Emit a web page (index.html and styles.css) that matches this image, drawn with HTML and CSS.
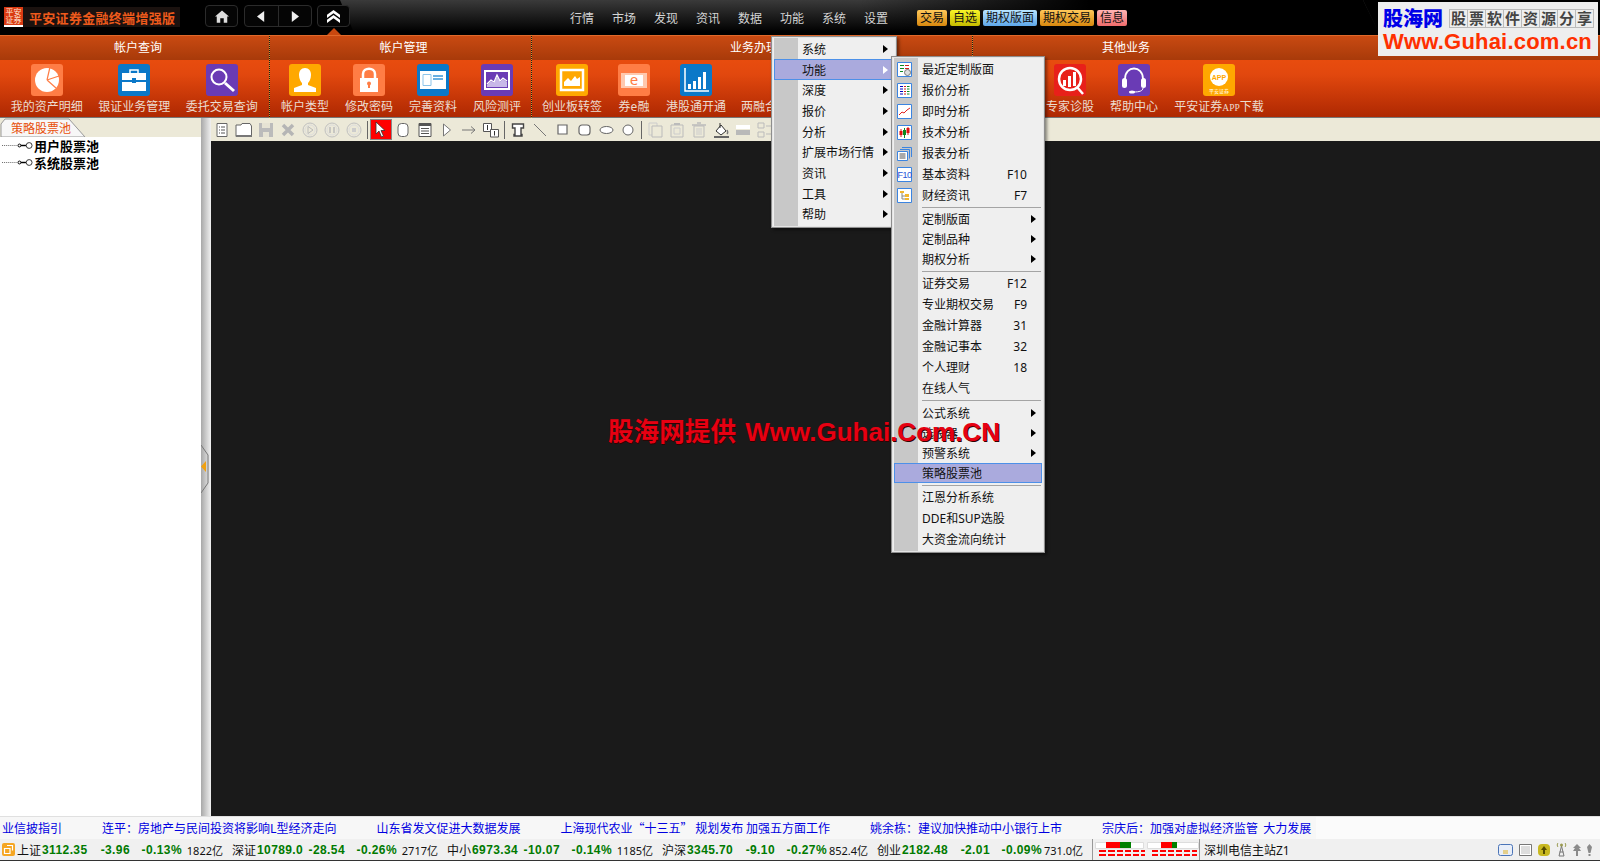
FILE: index.html
```html
<!DOCTYPE html>
<html lang="zh-CN">

<head>
    <meta charset="UTF-8">
    <title>平安证券金融终端增强版</title>
    <link rel="stylesheet" href="styles.css">
</head>

<body>
    <div class="topbar">
        <div class="brand">
            <div class="logo-box">
                <div class="logo">平安<br>证券</div>
                <div class="brand-name">平安证券金融终端增强版</div>
            </div>
            <div class="tbtn home-btn">
                <svg width="14" height="13" viewBox="0 0 16 14"><path d="M8 0 16 7H14V14H10V9H6V14H2V7H0Z" fill="#ddd"/></svg>
            </div>
            <div class="tbtn nav-btn">
                <span><svg width="8" height="13" viewBox="0 0 10 14"><path d="M9 0V14L0 7Z" fill="#eee"/></svg></span>
                <span class="nav-next"><svg width="8" height="13" viewBox="0 0 10 14"><path d="M1 0V14L10 7Z" fill="#eee"/></svg></span>
            </div>
            <div class="tbtn up-btn">
                <svg width="15" height="13" viewBox="0 0 16 14"><path d="M8 0 15 5V8.500L8 3.500 1 8.500V5ZM8 5.500 15 10.500V14L8 9 1 14V10.500Z" fill="#fff"/></svg>
            </div>
        </div>
        <div class="nav-panel">
            <div class="nav">
                <span>行情</span><span>市场</span><span>发现</span><span>资讯</span><span>数据</span><span>功能</span><span>系统</span><span>设置</span>
            </div>
            <div class="tags">
                <span class="tag tag-orange">交易</span>
                <span class="tag tag-yellow">自选</span>
                <span class="tag tag-blue">期权版面</span>
                <span class="tag tag-orange">期权交易</span>
                <span class="tag tag-pink">信息</span>
            </div>
        </div>
    </div>

    <div class="ribbon">
        <div class="group group-1">
            <div class="group-title">帐户查询</div>
            <div class="group-items">
                <div class="item w-87">
                    <span class="icon bg-peach"><svg width="32" height="32" viewBox="0 0 32 32"><circle cx="16" cy="16" r="12" fill="#fff"/><path d="M16 16 19 3M16 16 28 12M16 16 25 24" stroke="#ff7d45" stroke-width="1.2" fill="none"/></svg></span>
                    <span class="label">我的资产明细</span>
                </div>
                <div class="item w-87">
                    <span class="icon bg-blue"><svg width="32" height="32" viewBox="0 0 32 32"><path d="M12 9V6H20V9" stroke="#fff" stroke-width="1.5" fill="none"/><path d="M4 9H28V16H18V14H14V16H4ZM4 18H14V19H18V18H28V27H4Z" fill="#fff"/></svg></span>
                    <span class="label">银证业务管理</span>
                </div>
                <div class="item w-87">
                    <span class="icon bg-purple"><svg width="32" height="32" viewBox="0 0 32 32"><circle cx="13" cy="13" r="7.5" stroke="#fff" stroke-width="2" fill="none"/><path d="M19 19 28 27" stroke="#fff" stroke-width="3"/></svg></span>
                    <span class="label">委托交易查询</span>
                </div>
            </div>
        </div>
        <div class="group group-2">
            <div class="group-title">帐户管理</div>
            <div class="group-items">
                <div class="item w-64">
                    <span class="icon bg-amber"><svg width="32" height="32" viewBox="0 0 32 32"><path d="M16 4C20 4 22 7 22 11 22 15 20 18 19 19V21L27 24V28H5V24L13 21V19C12 18 10 15 10 11 10 7 12 4 16 4Z" fill="#fff"/></svg></span>
                    <span class="label">帐户类型</span>
                </div>
                <div class="item w-64">
                    <span class="icon bg-peach"><svg width="32" height="32" viewBox="0 0 32 32"><path d="M10 14V10C10 3 22 3 22 10V14" stroke="#fff" stroke-width="2.5" fill="none"/><path d="M7 14H25V28H7Z" fill="#fff"/><path d="M15 19H17V24H15Z" fill="#ff7d45"/><circle cx="16" cy="19.5" r="2" fill="#ff7d45"/></svg></span>
                    <span class="label">修改密码</span>
                </div>
                <div class="item w-64">
                    <span class="icon bg-blue"><svg width="32" height="32" viewBox="0 0 32 32"><path d="M3 7H29V25H3Z" fill="#fff"/><path d="M6 10.500H14V21.500H6Z" fill="none" stroke="#8cc4ea"/><path d="M16 12H26M16 15H26" stroke="#3b96d8" stroke-width="1.500"/></svg></span>
                    <span class="label">完善资料</span>
                </div>
                <div class="item w-64">
                    <span class="icon bg-purple"><svg width="32" height="32" viewBox="0 0 32 32"><path d="M4 7H28V25H4Z" fill="none" stroke="#fff" stroke-width="2"/><path d="M6 21 10 17 13 19 16 12 19 18 22 15 26 18V23H6Z" fill="#c8b8e8"/><path d="M6 20 10 16 13 18 16 11 19 17 22 14 26 17" stroke="#fff" stroke-width="1.200" fill="none"/></svg></span>
                    <span class="label">风险测评</span>
                </div>
            </div>
        </div>
        <div class="group group-3">
            <div class="group-title">业务办理</div>
            <div class="group-items">
                <div class="item w-62">
                    <span class="icon bg-amber"><svg width="32" height="32" viewBox="0 0 32 32"><path d="M5 6H27V26H5Z" fill="none" stroke="#fff" stroke-width="2.500"/><path d="M8 22V18L12 14 15 17 19 12 21 15 24 13V22Z" fill="#fff"/></svg></span>
                    <span class="label">创业板转签</span>
                </div>
                <div class="item w-62">
                    <span class="icon bg-peach"><svg width="32" height="32" viewBox="0 0 32 32"><path d="M3 9H29V24H3Z" fill="#ffc9ae"/><path d="M7 11H25V22H7Z" fill="#fff"/><text x="16" y="21" class="coin">e</text></svg></span>
                    <span class="label">券e融</span>
                </div>
                <div class="item w-62">
                    <span class="icon bg-blue"><svg width="32" height="32" viewBox="0 0 32 32"><path d="M5 4V27H29" fill="none" stroke="#fff" stroke-width="1.500"/><path d="M8 20H11V25H8ZM13 17H16V25H13ZM18 13H21V25H18ZM23 8H26V25H23Z" fill="#fff"/></svg></span>
                    <span class="label">港股通开通</span>
                </div>
                <div class="item w-76">
                    <span class="icon"></span>
                    <span class="label">两融合约</span>
                </div>
            </div>
        </div>
        <div class="group group-4">
            <div class="group-title">其他业务</div>
            <div class="group-items">
                <div class="item w-64">
                    <span class="icon bg-red"><svg width="32" height="32" viewBox="0 0 32 32"><circle cx="16" cy="15" r="11" fill="none" stroke="#fff" stroke-width="2.500"/><path d="M23 23 29 30" stroke="#fff" stroke-width="2.500"/><path d="M9 16H12V22H9ZM14 12H17V23H14ZM19 8H22V22H19Z" fill="#fff"/></svg></span>
                    <span class="label">专家诊股</span>
                </div>
                <div class="item w-64">
                    <span class="icon bg-purple"><svg width="32" height="32" viewBox="0 0 32 32"><path d="M7 15C7 1 25 1 25 15" fill="none" stroke="#fff" stroke-width="1.800"/><rect x="4" y="14" width="5" height="10" rx="2.500" fill="#fff"/><rect x="23" y="14" width="5" height="10" rx="2.500" fill="#fff"/><path d="M25 24C25 27 21 28 16 28" fill="none" stroke="#fff"/><ellipse cx="14" cy="28" rx="3" ry="1.500" fill="#fff"/></svg></span>
                    <span class="label">帮助中心</span>
                </div>
                <div class="item w-106">
                    <span class="icon bg-amber"><svg width="32" height="32" viewBox="0 0 32 32"><circle cx="16" cy="13" r="9" fill="#fff"/><text x="16" y="15.500" class="app">APP</text><text x="16" y="29" class="app-sub">平安证券</text></svg></span>
                    <span class="label">平安证券<span class="label-app">APP</span>下载</span>
                </div>
            </div>
        </div>
        <div class="group group-rest">
            <div class="group-title"></div>
            <div class="group-items"></div>
        </div>
    </div>

    <div class="main">
        <div class="sidebar">
            <div class="tab-strip">
                <div class="tab">
                    <svg class="tab-shape" width="86" height="19" viewBox="0 0 86 19"><path d="M1 19V6L5 1H69L85 19Z" fill="#f7f7f7" stroke="#999"/></svg>
                    <span class="tab-text">策略股票池</span>
                </div>
            </div>
            <div class="tree">
                <div class="tree-row">
                    <svg width="32" height="17" viewBox="0 0 33 17"><path d="M0 8.500H16" stroke="#666" stroke-dasharray="1 1"/><path d="M17 8.500H25" stroke="#000" stroke-width="1.500"/><circle cx="18" cy="8.500" r="1.500" fill="#fff" stroke="#000"/><circle cx="28" cy="8.500" r="3" fill="#fff" stroke="#333"/></svg>
                    <span>用户股票池</span>
                </div>
                <div class="tree-row">
                    <svg width="32" height="17" viewBox="0 0 33 17"><path d="M0 8.500H16" stroke="#666" stroke-dasharray="1 1"/><path d="M17 8.500H25" stroke="#000" stroke-width="1.500"/><circle cx="18" cy="8.500" r="1.500" fill="#fff" stroke="#000"/><circle cx="28" cy="8.500" r="3" fill="#fff" stroke="#333"/></svg>
                    <span>系统股票池</span>
                </div>
            </div>
        </div>
        <div class="splitter">
            <svg class="split-handle" width="10" height="50" viewBox="0 0 10 50"><path d="M0 1 7 11V39L0 49" fill="none" stroke="#777"/><path d="M5 17V28L0 22.500Z" fill="#f0a010"/></svg>
        </div>
        <div class="stage">
            <div class="toolbar">
                <span class="tool"><svg width="16" height="16" viewBox="0 0 16 16"><path d="M3 1.500H13V14.500H3Z" fill="#fff" stroke="#666"/><path d="M5 5H6M7 5H11M5 8H6M7 8H11M5 11H6M7 11H11" stroke="#555"/></svg></span>
                <span class="tool"><svg width="18" height="16" viewBox="0 0 18 16"><path d="M1 14.500V3H6L7 1.500H15L16.500 4V14.500Z" fill="#fff" stroke="#666"/><path d="M1 13H17V15H1Z" fill="#777"/></svg></span>
                <span class="tool"><svg width="16" height="16" viewBox="0 0 16 16"><path d="M1 1H15V15H1Z" fill="#bbb"/><path d="M4 1H12V6H4ZM5 10H11V15H5Z" fill="#e6e3d4"/></svg></span>
                <span class="tool"><svg width="14" height="14" viewBox="0 0 14 14"><path d="M2 2 12 12M12 2 2 12" stroke="#b5b5b5" stroke-width="3.500"/></svg></span>
                <span class="tool"><svg width="16" height="16" viewBox="0 0 16 16"><circle cx="8" cy="8" r="7" fill="none" stroke="#c0c0c0"/><circle cx="8" cy="8" r="5" fill="none" stroke="#ddd"/><path d="M6 4.500V11.500L11 8Z" fill="none" stroke="#bbb"/></svg></span>
                <span class="tool"><svg width="16" height="16" viewBox="0 0 16 16"><circle cx="8" cy="8" r="7" fill="none" stroke="#c0c0c0"/><circle cx="8" cy="8" r="5" fill="none" stroke="#ddd"/><path d="M6 5V11M10 5V11" stroke="#bbb" stroke-width="1.500"/></svg></span>
                <span class="tool"><svg width="16" height="16" viewBox="0 0 16 16"><circle cx="8" cy="8" r="7" fill="none" stroke="#c0c0c0"/><circle cx="8" cy="8" r="5" fill="none" stroke="#ddd"/><path d="M6 6H10V10H6Z" fill="#ccc"/></svg></span>
                <span class="tool-sep"></span>
                <span class="tool tool-on"><svg width="12" height="17" viewBox="0 0 12 17"><path d="M1 1V13L4 10 6.500 16 8.500 15 6 9.500H10Z" fill="#fff" stroke="#333" stroke-width=".8"/></svg></span>
                <span class="tool"><svg width="12" height="16" viewBox="0 0 12 16"><rect x="1" y="1.500" width="10" height="13" rx="3.500" fill="#fff" stroke="#666"/></svg></span>
                <span class="tool"><svg width="14" height="16" viewBox="0 0 14 16"><path d="M1 1.500H13V14.500H1Z" fill="#fff" stroke="#555"/><path d="M1 3H13" stroke="#555" stroke-width="2"/><path d="M3 6.500H11M3 9H11M3 11.500H11" stroke="#555"/></svg></span>
                <span class="tool"><svg width="10" height="14" viewBox="0 0 10 14"><path d="M1.500 1V13L8.500 7Z" fill="#fff" stroke="#777"/></svg></span>
                <span class="tool"><svg width="14" height="10" viewBox="0 0 14 10"><path d="M0 5H13M9 1.500 13 5 9 8.500" fill="none" stroke="#777"/></svg></span>
                <span class="tool"><svg width="16" height="16" viewBox="0 0 16 16"><path d="M.500 1.500H8.500V9.500H.500Z" fill="#fff" stroke="#555"/><path d="M7.500 7.500H15.500V15H7.500Z" fill="#fff" stroke="#555"/><path d="M4.500 3V8M11.500 9V13.500" stroke="#333"/></svg></span>
                <span class="tool-sep"></span>
                <span class="tool"><svg width="14" height="14" viewBox="0 0 14 14"><path d="M1.500 1H12.500V5H10V11.500H11V13H3V11.500H4V5H1.500Z" fill="#fff" stroke="#444" stroke-width="1.400"/></svg></span>
                <span class="tool"><svg width="12" height="12" viewBox="0 0 12 12"><path d="M0 0 12 12" stroke="#777"/></svg></span>
                <span class="tool"><svg width="11" height="11" viewBox="0 0 11 11"><path d="M1 1H10V10H1Z" fill="#fff" stroke="#666" stroke-width="1.200"/></svg></span>
                <span class="tool"><svg width="13" height="12" viewBox="0 0 13 12"><rect x="1" y="1" width="11" height="10" rx="3" fill="#fff" stroke="#666" stroke-width="1.200"/></svg></span>
                <span class="tool"><svg width="15" height="10" viewBox="0 0 15 10"><ellipse cx="7.500" cy="5" rx="6.500" ry="3.500" fill="#fff" stroke="#666"/></svg></span>
                <span class="tool"><svg width="12" height="12" viewBox="0 0 12 12"><circle cx="6" cy="6" r="5" fill="#fff" stroke="#666"/></svg></span>
                <span class="tool-sep"></span>
                <span class="tool"><svg width="15" height="16" viewBox="0 0 15 16"><path d="M1 1H9V13H1Z" fill="none" stroke="#ccc"/><path d="M4 4H14V15H4Z" fill="#ece9d8" stroke="#bbb"/></svg></span>
                <span class="tool"><svg width="14" height="16" viewBox="0 0 14 16"><path d="M1 3H13V15H1Z" fill="none" stroke="#bbb"/><path d="M4 6H10V12H4Z" fill="none" stroke="#ccc"/><path d="M4 1H10V3H4Z" fill="#bbb"/></svg></span>
                <span class="tool"><svg width="14" height="16" viewBox="0 0 14 16"><path d="M0 3H14M5 1H9" stroke="#bbb" stroke-width="1.500"/><path d="M2 4H12V15H2Z" fill="none" stroke="#bbb"/><path d="M5 6V13M7 6V13M9 6V13" stroke="#ccc"/></svg></span>
                <span class="tool"><svg width="15" height="16" viewBox="0 0 15 16"><path d="M2 9 7 3 12 9 7 13Z" fill="#fff" stroke="#333"/><path d="M6 1V6" stroke="#333"/><path d="M13 8C14 10 14 11 13 12" stroke="#777" stroke-width="1.500" fill="none"/><path d="M0 14H15V16H0Z" fill="#666"/></svg></span>
                <span class="tool"><svg width="14" height="10" viewBox="0 0 14 10"><path d="M0 0H14V4H0Z" fill="#fff"/><path d="M0 5H14V10H0Z" fill="#b9b9b9"/></svg></span>
                <span class="tool"><svg width="16" height="16" viewBox="0 0 16 16"><path d="M1 1H7V6H1ZM1 10H7V15H1Z" fill="none" stroke="#bbb"/><path d="M9 4H15M9 12H15" stroke="#bbb"/></svg></span>
            </div>
            <div class="chart-area"></div>
        </div>
    </div>

    <div class="ticker">
        <div class="ticker-track">
            <span>业信披指引</span>
            <span>连平：房地产与民间投资将影响L型经济走向</span>
            <span>山东省发文促进大数据发展</span>
            <span>上海现代农业“十三五” 规划发布&nbsp;加强五方面工作</span>
            <span>姚余栋：建议加快推动中小银行上市</span>
            <span>宗庆后：加强对虚拟经济监管&nbsp;&nbsp;大力发展</span>
        </div>
    </div>

    <div class="statusbar">
        <svg class="status-logo" width="13" height="13" viewBox="0 0 13 13"><rect width="13" height="13" rx="2" fill="#f5a623"/><path d="M2.500 5.500H8V10.500H2.500ZM5 2.500H10.500V7.500" fill="none" stroke="#fff" stroke-width="1.200"/></svg>
        <div class="quotes">
            <div class="quote"><span>上证</span><b>3112.35</b><b class="r">-3.96</b><b class="r">-0.13%</b><span class="r amount">1822亿</span></div>
            <div class="quote"><span>深证</span><b>10789.0</b><b class="r">-28.54</b><b class="r">-0.26%</b><span class="r amount">2717亿</span></div>
            <div class="quote"><span>中小</span><b>6973.34</b><b class="r">-10.07</b><b class="r">-0.14%</b><span class="r amount">1185亿</span></div>
            <div class="quote"><span>沪深</span><b>3345.70</b><b class="r">-9.10</b><b class="r">-0.27%</b><span class="r amount">852.4亿</span></div>
            <div class="quote"><span>创业</span><b>2182.48</b><b class="r">-2.01</b><b class="r">-0.09%</b><span class="r amount">731.0亿</span></div>
        </div>
        <div class="bars">
            <svg width="104" height="16" viewBox="0 0 104 16">
                <path d="M.500 .500H48.500V6.500H.500ZM52.500 .500H103.500V6.500H52.500Z" fill="#fff" stroke="#ddd"/>
                <path d="M11 0H25V6H11ZM66 0H77V6H66Z" fill="#f00"/>
                <path d="M25 0H36V6H25ZM77 0H82V6H77Z" fill="#008000"/>
                <path d="M4 8H11V10H4ZM13 8H20V10H13ZM22 8H28V10H22ZM30 8H36V10H30ZM38 8H44V10H38ZM46 8H50V10H46ZM57 8H63V10H57ZM65 8H71V10H65ZM73 8H79V10H73ZM81 8H87V10H81ZM89 8H95V10H89ZM97 8H102V10H97Z" fill="#f00"/>
                <path d="M4 12H11V14H4ZM13 12H20V14H13ZM22 12H28V14H22ZM30 12H36V14H30ZM38 12H44V14H38ZM46 12H50V14H46ZM57 12H63V14H57ZM65 12H71V14H65ZM73 12H79V14H73ZM81 12H87V14H81ZM89 12H95V14H89ZM97 12H102V14H97Z" fill="#f00"/>
            </svg>
        </div>
        <div class="server">深圳电信主站Z1</div>
        <div class="status-icons">
            <svg width="15" height="12" viewBox="0 0 15 12"><rect x=".500" y=".500" width="14" height="11" rx="2" fill="#e8eef8" stroke="#4a74b8"/><path d="M5 7H10M5 9H10" stroke="#e0b020"/></svg>
            <svg width="13" height="12" viewBox="0 0 13 12"><path d="M.500 .500H12.500V11.500H.500Z" fill="#fff" stroke="#777"/><path d="M2 3H11M2 5H11M2 7H11M2 9H11" stroke="#bbb"/></svg>
            <svg width="12" height="12" viewBox="0 0 12 12"><rect width="12" height="12" rx="4" fill="#c8b820"/><path d="M6 2 9 6H7V10H5V6H3Z" fill="#554c00"/></svg>
            <svg width="11" height="15" viewBox="0 0 11 15"><path d="M5.500 4 3 14H8ZM3.500 10H7.500" fill="none" stroke="#777"/><circle cx="5.500" cy="3" r="1.500" fill="#9a9a50"/><path d="M2 1C1 2 1 4 2 5M9 1C10 2 10 4 9 5" fill="none" stroke="#9a9a50"/></svg>
            <svg width="8" height="12" viewBox="0 0 8 12"><path d="M4 0 8 4H6L8 7H5V12H3V7H0L2 4H0Z" fill="#8a8a8a"/></svg>
            <svg width="5" height="12" viewBox="0 0 5 12"><path d="M2.500 0 5 3 3.500 9H1.500L0 3ZM1.500 10H3.500V12H1.500Z" fill="#8a8a8a"/></svg>
        </div>
    </div>

    <!-- menus opened from 功能 -->
    <div class="menu menu-main">
        <div class="row more">系统</div>
        <div class="row more active">功能</div>
        <div class="row more">深度</div>
        <div class="row more">报价</div>
        <div class="row more">分析</div>
        <div class="row more">扩展市场行情</div>
        <div class="row more">资讯</div>
        <div class="row more">工具</div>
        <div class="row more">帮助</div>
    </div>

    <div class="menu menu-sub">
        <div class="row tall">
            <svg width="15" height="15" viewBox="0 0 15 15"><path d="M.500 .500H14.500V14.500H.500Z" fill="#fff" stroke="#3b84e0"/><path d="M3 3.500H7M3 6.500H7M3 9.500H6" stroke="#0a8a20"/><path d="M8 3.500H12M8 6.500H12" stroke="#d02020"/><circle cx="10.500" cy="10.500" r="3" fill="#ddd" stroke="#777"/></svg>
            最近定制版面
        </div>
        <div class="row tall">
            <svg width="15" height="15" viewBox="0 0 15 15"><path d="M.500 .500H14.500V14.500H.500Z" fill="#fff" stroke="#3b84e0"/><path d="M3 3.500H6M3 6H6M3 8.500H6M3 11H6" stroke="#0000c0"/><path d="M7 3.500H9M7 6H9M7 8.500H9M7 11H9" stroke="#d02020"/><path d="M10 3.500H12.500M10 6H12.500M10 8.500H12.500M10 11H12.500" stroke="#0a8a20"/></svg>
            报价分析
        </div>
        <div class="row tall">
            <svg width="15" height="15" viewBox="0 0 15 15"><path d="M.500 .500H14.500V14.500H.500Z" fill="#fff" stroke="#3b84e0"/><path d="M2 11 5 8 7 9 10 6 13 4" fill="none" stroke="#e02020"/></svg>
            即时分析
        </div>
        <div class="row tall">
            <svg width="15" height="15" viewBox="0 0 15 15"><path d="M.500 .500H14.500V14.500H.500Z" fill="#fff" stroke="#3b84e0"/><path d="M4 4V12M11 2V10" stroke="#d02020"/><path d="M7.500 3V13" stroke="#0a8a20"/><path d="M2.500 6H5.500V10H2.500ZM9.500 3H12.500V8H9.500Z" fill="#e01010"/><path d="M6 5H9V10H6Z" fill="#0a8a20"/></svg>
            技术分析
        </div>
        <div class="row tall">
            <svg width="15" height="15" viewBox="0 0 15 15"><path d="M5 1.500H14.500V11" fill="none" stroke="#3b84e0"/><path d="M3 3.500H12.500V12.500" fill="none" stroke="#3b84e0"/><path d="M.500 5.500H10.500V14.500H.500Z" fill="#fff" stroke="#3b84e0"/><path d="M2.500 8H8.500M2.500 10H8.500M2.500 12H8.500" stroke="#555"/></svg>
            报表分析
        </div>
        <div class="row tall">
            <svg width="15" height="15" viewBox="0 0 15 15"><path d="M.500 .500H14.500V14.500H.500Z" fill="#fff" stroke="#3b84e0"/><text x="7.500" y="11" class="f10">F10</text></svg>
            基本资料<span class="key">F10</span>
        </div>
        <div class="row tall">
            <svg width="15" height="15" viewBox="0 0 15 15"><path d="M.500 .500H14.500V14.500H.500Z" fill="#fff" stroke="#3b84e0"/><path d="M5 5V11H8M5 8H8" fill="none" stroke="#888"/><path d="M3 3H7V5H3ZM8 6H12V9H8ZM8 10H12V12H8Z" fill="#f2b632"/></svg>
            财经资讯<span class="key">F7</span>
        </div>
        <div class="sep"></div>
        <div class="row more">定制版面</div>
        <div class="row more">定制品种</div>
        <div class="row more">期权分析</div>
        <div class="sep sep-low"></div>
        <div class="row tall">证券交易<span class="key">F12</span></div>
        <div class="row tall">专业期权交易<span class="key">F9</span></div>
        <div class="row tall">金融计算器<span class="key">31</span></div>
        <div class="row tall">金融记事本<span class="key">32</span></div>
        <div class="row tall">个人理财<span class="key">18</span></div>
        <div class="row tall">在线人气</div>
        <div class="sep sep-high"></div>
        <div class="row more">公式系统</div>
        <div class="row more">选股器</div>
        <div class="row more">预警系统</div>
        <div class="row active">策略股票池</div>
        <div class="sep sep-low"></div>
        <div class="row tall">江恩分析系统</div>
        <div class="row tall">DDE和SUP选股</div>
        <div class="row tall">大资金流向统计</div>
    </div>

    <div class="stamp"><span class="stamp-cn">股海网提供</span> Www.Guhai.Com.CN</div>

    <div class="site-mark">
        <div class="site-top">
            <span class="site-name">股海网</span>
            <span class="site-cells"><i>股</i><i>票</i><i>软</i><i>件</i><i>资</i><i>源</i><i>分</i><i>享</i></span>
        </div>
        <div class="site-url">Www.Guhai.com.cn</div>
    </div>
</body>

</html>
```

FILE: styles.css
```css
* {
    box-sizing: border-box;
}

body {
    margin: 0;
    width: 1600px;
    height: 861px;
    overflow: hidden;
    position: relative;
    display: flex;
    flex-direction: column;
    background: #1a1a1a;
    font-family: "Noto Sans", "Noto Sans CJK SC", sans-serif;
    font-size: 12px;
    color: #111;
}

/* top bar */
.topbar {
    height: 35px;
    display: flex;
    background: #000;
}

.brand {
    width: 340px;
    flex: none;
    display: flex;
    align-items: flex-start;
    position: relative;
    z-index: 1;
}

.logo-box {
    width: 176px;
    height: 20px;
    flex: none;
    margin: 7px 25px 0 4px;
    display: flex;
    align-items: center;
    background: #1b120f;
}

.logo {
    width: 19px;
    height: 20px;
    flex: none;
    padding-top: 1px;
    background: #d93a12;
    border-bottom: 2px solid #fff;
    color: #ffe6d4;
    font-size: 8px;
    line-height: 8px;
    text-align: center;
}

.brand-name {
    margin-left: 6px;
    color: #ee5a1c;
    font-size: 13px;
    font-weight: 700;
    letter-spacing: .3px;
    white-space: nowrap;
}

.tbtn {
    height: 22px;
    flex: none;
    margin-top: 5px;
    display: flex;
    align-items: center;
    justify-content: center;
    background: #050505;
    border: 1px solid #2b2b2b;
    border-radius: 4px;
}

.home-btn {
    width: 33px;
    margin-right: 6px;
}

.nav-btn {
    width: 68px;
    margin-right: 5px;
}

.nav-btn span {
    flex: 1;
    height: 100%;
    display: flex;
    align-items: center;
    justify-content: center;
}

.nav-next {
    border-left: 1px solid #2b2b2b;
}

.up-btn {
    width: 33px;
    position: relative;
}

.up-btn::after {
    content: "";
    position: absolute;
    left: 9px;
    top: 22px;
    border-left: 7px solid transparent;
    border-right: 7px solid transparent;
    border-bottom: 7px solid #c9480f;
}

.nav-panel {
    width: 1040px;
    padding-left: 230px;
    display: flex;
    align-items: center;
    background: linear-gradient(to right, transparent 50%, #000 72%), linear-gradient(#3a3a3a, #000 32px);
    clip-path: polygon(0 0, 1023px 0, 1040px 35px, 15px 35px);
}

.nav {
    display: flex;
    color: #d4d4d4;
}

.nav span {
    width: 42px;
}

.tags {
    display: flex;
    gap: 3px;
    margin-left: 11px;
}

.tag {
    height: 16px;
    padding: 0 3px;
    border-radius: 2px;
    line-height: 16px;
    white-space: nowrap;
}

.tag-orange {
    background: linear-gradient(#ffc85a, #d8880e);
}

.tag-yellow {
    background: linear-gradient(#f8f428, #c6bc00);
}

.tag-blue {
    background: linear-gradient(#b8e4ff, #5ea8ea);
}

.tag-pink {
    background: linear-gradient(#ffb4b4, #f06c6c);
}

/* ribbon */
.ribbon {
    height: 83px;
    display: flex;
}

.group {
    display: flex;
    flex-direction: column;
}

.group-1 {
    width: 270px;
}

.group-2 {
    width: 262px;
}

.group-3 {
    width: 441px;
}

.group-4 {
    width: 306px;
}

.group-rest {
    flex: 1;
}

.group-1,
.group-2,
.group-3 {
    border-right: 1px dotted #d89030;
}

.group-title {
    height: 25px;
    flex: none;
    border-top: 1px solid #e0692a;
    background: linear-gradient(#c94a12, #a83a0a);
    color: #fff;
    line-height: 23px;
    text-align: center;
}

.group-1 .group-title {
    padding-left: 7px;
}

.group-2 .group-title {
    padding-left: 6px;
}

.group-3 .group-title {
    padding-left: 4px;
}

.group-items {
    flex: 1;
    display: flex;
    background: linear-gradient(#e84c0e, #e2480e 25%, #ae2802);
    border-bottom: 1px solid #777;
}

.group-1 .group-items {
    padding-left: 3px;
}

.group-2 .group-items {
    padding-left: 3px;
}

.group-3 .group-items {
    padding-left: 9px;
}

.group-4 .group-items {
    padding-left: 65px;
}

.item {
    padding-top: 4px;
    display: flex;
    flex-direction: column;
    align-items: center;
}

.w-87 {
    width: 87.5px;
}

.w-64 {
    width: 64px;
}

.w-62 {
    width: 62px;
}

.w-76 {
    width: 76px;
}

.w-106 {
    width: 106px;
}

.icon {
    width: 32px;
    height: 32px;
    border-radius: 3px;
}

.icon svg {
    display: block;
}

.bg-peach {
    background: #ff7d45;
}

.bg-blue {
    background: #0b78c8;
}

.bg-purple {
    background: #6a3bb5;
}

.bg-amber {
    background: #ffa800;
}

.bg-red {
    background: #e8201a;
}

.coin {
    font-size: 15px;
    fill: #ff7d45;
    text-anchor: middle;
}

.app {
    font-family: "Liberation Sans", sans-serif;
    font-size: 7px;
    font-weight: 700;
    fill: #ffa800;
    text-anchor: middle;
}

.app-sub {
    font-size: 5px;
    fill: #fff;
    text-anchor: middle;
}

.label {
    margin-top: 3px;
    color: #ecdcd0;
    line-height: 16px;
    white-space: nowrap;
}

.label-app {
    font-family: "Liberation Serif", serif;
    font-size: 9.500px;
}

/* body of the window */
.main {
    height: 698px;
    display: flex;
}

.sidebar {
    width: 201px;
    flex: none;
    background: #fff;
}

.tab-strip {
    height: 19px;
    background: #ece9d8;
}

.tab {
    width: 86px;
    height: 19px;
    position: relative;
    padding: 1px 0 0 11px;
    color: #e8500a;
    line-height: 19px;
}

.tab-shape {
    position: absolute;
    left: 0;
    top: 0;
}

.tab-text {
    position: relative;
}

.tree {
    padding-left: 2px;
}

.tree-row {
    height: 17px;
    display: flex;
    align-items: center;
    font-size: 13px;
    font-weight: 700;
    color: #000;
}

.splitter {
    width: 10px;
    flex: none;
    position: relative;
    background: linear-gradient(to right, #a8a8a8, #f0f0f0);
}

.split-handle {
    position: absolute;
    left: 0;
    top: 326px;
}

.stage {
    flex: 1;
    display: flex;
    flex-direction: column;
}

.toolbar {
    height: 23px;
    flex: none;
    display: flex;
    align-items: center;
    background: #ece9d8;
}

.tool {
    width: 22px;
    height: 21px;
    flex: none;
    display: flex;
    align-items: center;
    justify-content: center;
}

.tool-on {
    background: #f00;
    border: 1px solid #888;
}

.tool-sep {
    width: 1px;
    height: 18px;
    flex: none;
    margin: 0 2px;
    background: #666;
}

.chart-area {
    flex: 1;
    background: #1a1a1a;
}

/* news line */
.ticker {
    height: 23px;
    flex: none;
    border-top: 1px solid #e0e0e0;
    background: #fbfbfb;
}

.ticker-track {
    width: 1316px;
    height: 22px;
    padding-left: 2px;
    display: flex;
    gap: 40px;
    overflow: hidden;
    background: #f7f7f7;
    color: #0000e0;
    font-family: "Noto Sans CJK SC", sans-serif;
    line-height: 22px;
    white-space: nowrap;
}

.ticker-track span {
    flex: none;
}

/* status bar */
.statusbar {
    height: 22px;
    flex: none;
    display: flex;
    align-items: center;
    border-bottom: 1px solid #333;
    background: #f0f0f0;
}

.status-logo {
    flex: none;
    margin: 0 2px;
}

.quotes {
    display: flex;
}

.quote {
    width: 215px;
    display: grid;
    grid-template-columns: 25px 46px 42px 52px 41px;
    align-items: center;
    white-space: nowrap;
}

.quote b {
    font-family: "Liberation Sans", sans-serif;
    font-size: 12px;
    letter-spacing: .4px;
    color: #007a00;
}

.quote .r {
    justify-self: end;
}

.quote .amount {
    font-size: 11px;
}

.bars {
    width: 108px;
    height: 100%;
    flex: none;
    display: flex;
    align-items: center;
    padding-left: 2px;
    border-left: 1px solid #999;
    border-right: 1px solid #999;
}

.server {
    margin-left: 4px;
}

.status-icons {
    margin-left: auto;
    margin-right: 8px;
    display: flex;
    align-items: center;
    gap: 6px;
}

/* popup menus */
.menu {
    position: absolute;
    padding-top: 1.500px;
    border: 1px solid #8e8e8e;
    background: linear-gradient(to right, #efefef 2px, #c8c8c8 2px, #c8c8c8 26px, #efefef 26px);
    box-shadow: 2px 2px 3px rgba(0, 0, 0, .45), inset 0 0 0 1px #e4e4e4;
}

.menu-main {
    left: 771px;
    top: 36px;
    width: 126px;
    height: 192px;
    z-index: 2;
}

.menu-sub {
    left: 891px;
    top: 56px;
    width: 154px;
    height: 497px;
    z-index: 3;
}

.row {
    height: 20px;
    margin: 0 2px;
    padding: 0 6px 0 28px;
    display: flex;
    align-items: center;
    white-space: nowrap;
}

.menu-main .row {
    height: 20.700px;
}

.row.tall {
    height: 21px;
}

.row svg {
    flex: none;
    margin-left: -25px;
    margin-right: 10px;
}

.row.more::after {
    content: "";
    margin-left: auto;
    border-left: 5px solid #000;
    border-top: 4px solid transparent;
    border-bottom: 4px solid transparent;
}

.row.active {
    background: #aaaadd;
    box-shadow: inset 0 0 0 1px #4d90e8;
}

.row.active.more::after {
    border-left-color: #fff;
}

.key {
    margin-left: auto;
    margin-right: 9px;
}

.f10 {
    font-family: "Liberation Sans", sans-serif;
    font-size: 9px;
    letter-spacing: -.5px;
    fill: #1f55d8;
    text-anchor: middle;
}

.sep {
    margin: 1px 3px 1px 30px;
    border-top: 1px solid #a4a4a4;
}

.sep-low {
    margin-top: 2px;
}

.sep-high {
    margin-bottom: 2px;
}

/* watermarks pasted over the shot */
.stamp {
    position: absolute;
    left: 608px;
    top: 414px;
    z-index: 5;
    color: #e60012;
    font-family: "Liberation Sans", "Noto Sans CJK SC", sans-serif;
    font-size: 26px;
    font-weight: 700;
    line-height: 36px;
    word-spacing: 2px;
    text-shadow: 1px 1px 0 #300;
    white-space: nowrap;
}

.stamp-cn {
    font-size: 25.600px;
}

.site-mark {
    position: absolute;
    left: 1378px;
    top: 2px;
    width: 220px;
    height: 54px;
    z-index: 5;
    padding: 5px 0 0 5px;
    background: #eeeeee;
}

.site-top {
    height: 23px;
    display: flex;
    align-items: center;
}

.site-name {
    width: 66px;
    color: #0000e8;
    font-size: 20px;
    font-weight: 900;
    line-height: 23px;
}

.site-cells {
    display: flex;
    border-left: 1px solid #bbb;
}

.site-cells i {
    width: 18px;
    height: 19px;
    border: 1px solid #bbb;
    border-left: 0;
    color: #444;
    font-size: 15px;
    font-style: normal;
    font-weight: 700;
    line-height: 17px;
    text-align: center;
}

.site-url {
    color: #ff3000;
    font-family: "Liberation Sans", sans-serif;
    font-size: 22px;
    font-weight: 700;
    letter-spacing: .2px;
    line-height: 23px;
    white-space: nowrap;
}
```
